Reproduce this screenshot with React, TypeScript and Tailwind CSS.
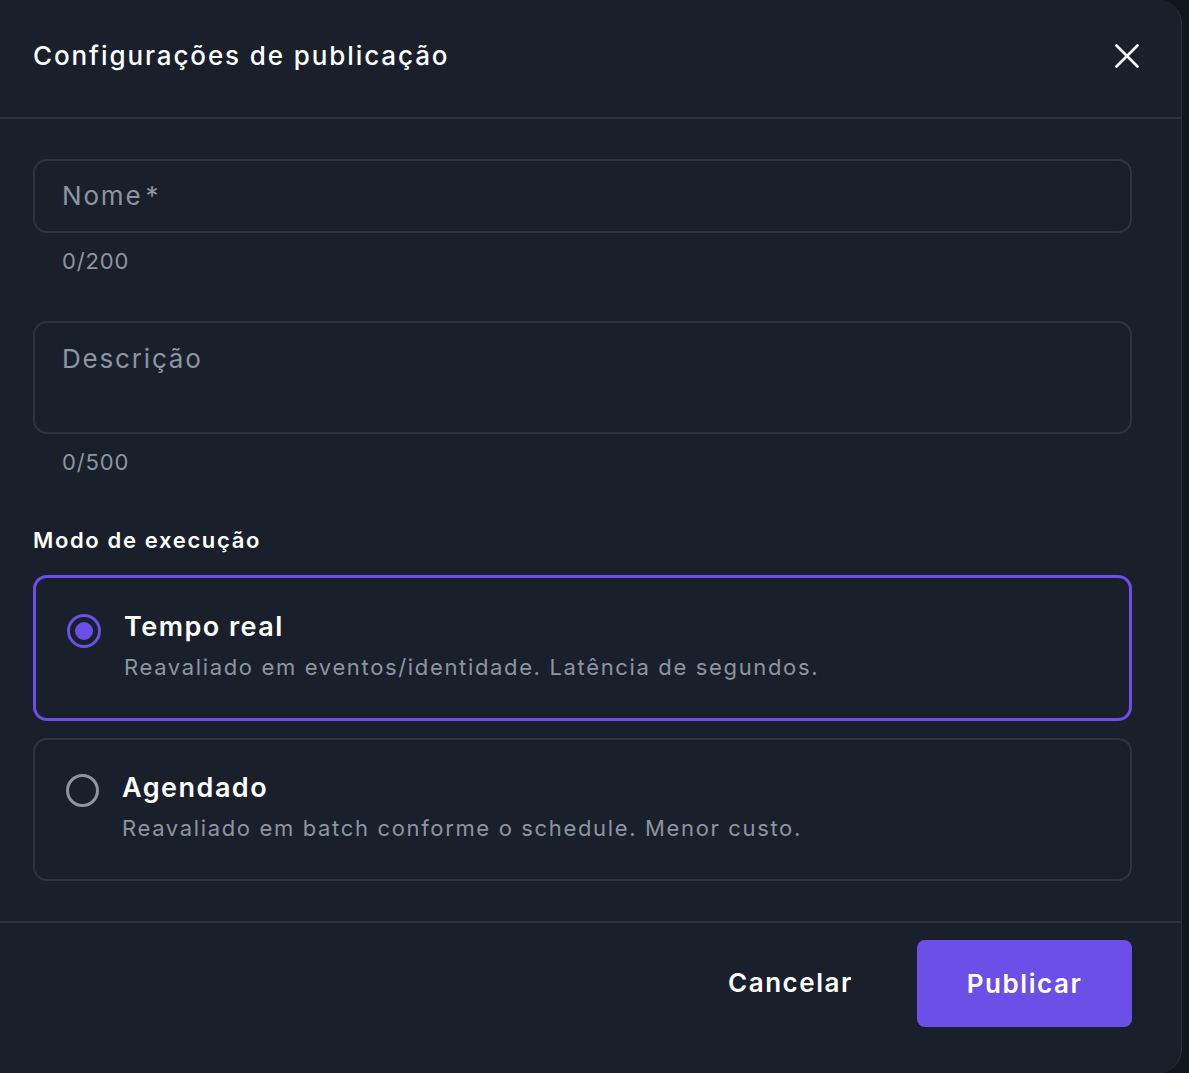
const font = { fontFamily: "Inter, 'Noto Sans', sans-serif" };

function Radio({ checked }: { checked: boolean }) {
  if (checked) {
    return (
      <span className="flex h-[34px] w-[34px] shrink-0 items-center justify-center rounded-full border-[3px] border-[#6b4fe6]">
        <span className="block h-[18px] w-[18px] rounded-full bg-[#6b4fe6]" />
      </span>
    );
  }
  return <span className="block h-[33px] w-[33px] shrink-0 rounded-full border-[3px] border-[#8e94a0]" />;
}

function ModeCard({ title, desc, checked }: { title: string; desc: string; checked: boolean }) {
  return (
    <div
      className={
        checked
          ? "flex gap-[23px] rounded-[14px] border-[3px] border-[#6b4fe6] pl-[31px] pt-[31px] pb-[36px]"
          : "flex gap-[23px] rounded-[14px] border-2 border-[#2e3542] pl-[31px] pt-[30px] pb-[36px]"
      }
    >
      <div className={checked ? "pt-[5px]" : "pt-[4px]"}>
        <Radio checked={checked} />
      </div>
      <div className="flex flex-col">
        <span className="text-[27px] font-semibold leading-[36px] tracking-[0.055em] text-white">{title}</span>
        <span className="mt-[7px] text-[22px] leading-[30px] tracking-[0.075em] text-[#8e94a0]">{desc}</span>
      </div>
    </div>
  );
}

export default function App() {
  return (
    <div className="h-[1073px] w-[1189px] bg-[#111620]" style={font}>
      <div className="flex h-[1073px] w-[1182px] flex-col rounded-r-[24px] border-r border-[#2e3542] bg-[#19202c]">
        <header className="flex h-[119px] items-center justify-between border-b-2 border-[#2e3542] pl-[33px] pr-[42px] pb-[6px]">
          <h1 className="text-[26px] font-medium leading-[34px] tracking-[0.073em] text-white">
            Configurações de publicação
          </h1>
          <button aria-label="Fechar" className="text-white">
            <svg width="24" height="24" viewBox="0 0 24 24" fill="none" stroke="currentColor" strokeWidth="2.6" strokeLinecap="round">
              <path d="M1.5 1.5 22.5 22.5M22.5 1.5 1.5 22.5" />
            </svg>
          </button>
        </header>

        <div className="flex flex-1 flex-col pl-[33px] pr-[49px] pt-[40px]">
          <div className="flex h-[74px] items-center rounded-[14px] border-2 border-[#2e3542] px-[27px]">
            <span className="text-[26px] leading-[34px] tracking-[0.07em] text-[#8e94a0]">
              Nome<span className="ml-[3px]">*</span>
            </span>
          </div>
          <span className="mt-[13px] pl-[29px] text-[22px] leading-[30px] tracking-[0.04em] text-[#8e94a0]">0/200</span>

          <div className="mt-[45px] h-[113px] rounded-[14px] border-2 border-[#2e3542] px-[27px] pt-[19px]">
            <span className="text-[26px] leading-[34px] tracking-[0.07em] text-[#8e94a0]">Descrição</span>
          </div>
          <span className="mt-[13px] pl-[29px] text-[22px] leading-[30px] tracking-[0.04em] text-[#8e94a0]">0/500</span>

          <span className="mt-[48px] text-[22px] font-semibold leading-[30px] tracking-[0.075em] text-white">
            Modo de execução
          </span>

          <div className="mt-[20px] flex flex-col gap-[17px]">
            <ModeCard checked title="Tempo real" desc="Reavaliado em eventos/identidade. Latência de segundos." />
            <ModeCard checked={false} title="Agendado" desc="Reavaliado em batch conforme o schedule. Menor custo." />
          </div>
        </div>

        <footer className="flex items-start justify-end gap-[32px] border-t-2 border-[#2e3542] pr-[49px] pt-[17px] pb-[46px]">
          <button className="mt-[25px] px-[32px] text-[26px] font-semibold leading-[36px] tracking-[0.06em] text-white">
            Cancelar
          </button>
          <button className="flex h-[87px] w-[215px] items-center justify-center rounded-[8px] bg-[#6b4fe6] text-[26px] font-semibold tracking-[0.06em] text-white">
            Publicar
          </button>
        </footer>
      </div>
    </div>
  );
}
